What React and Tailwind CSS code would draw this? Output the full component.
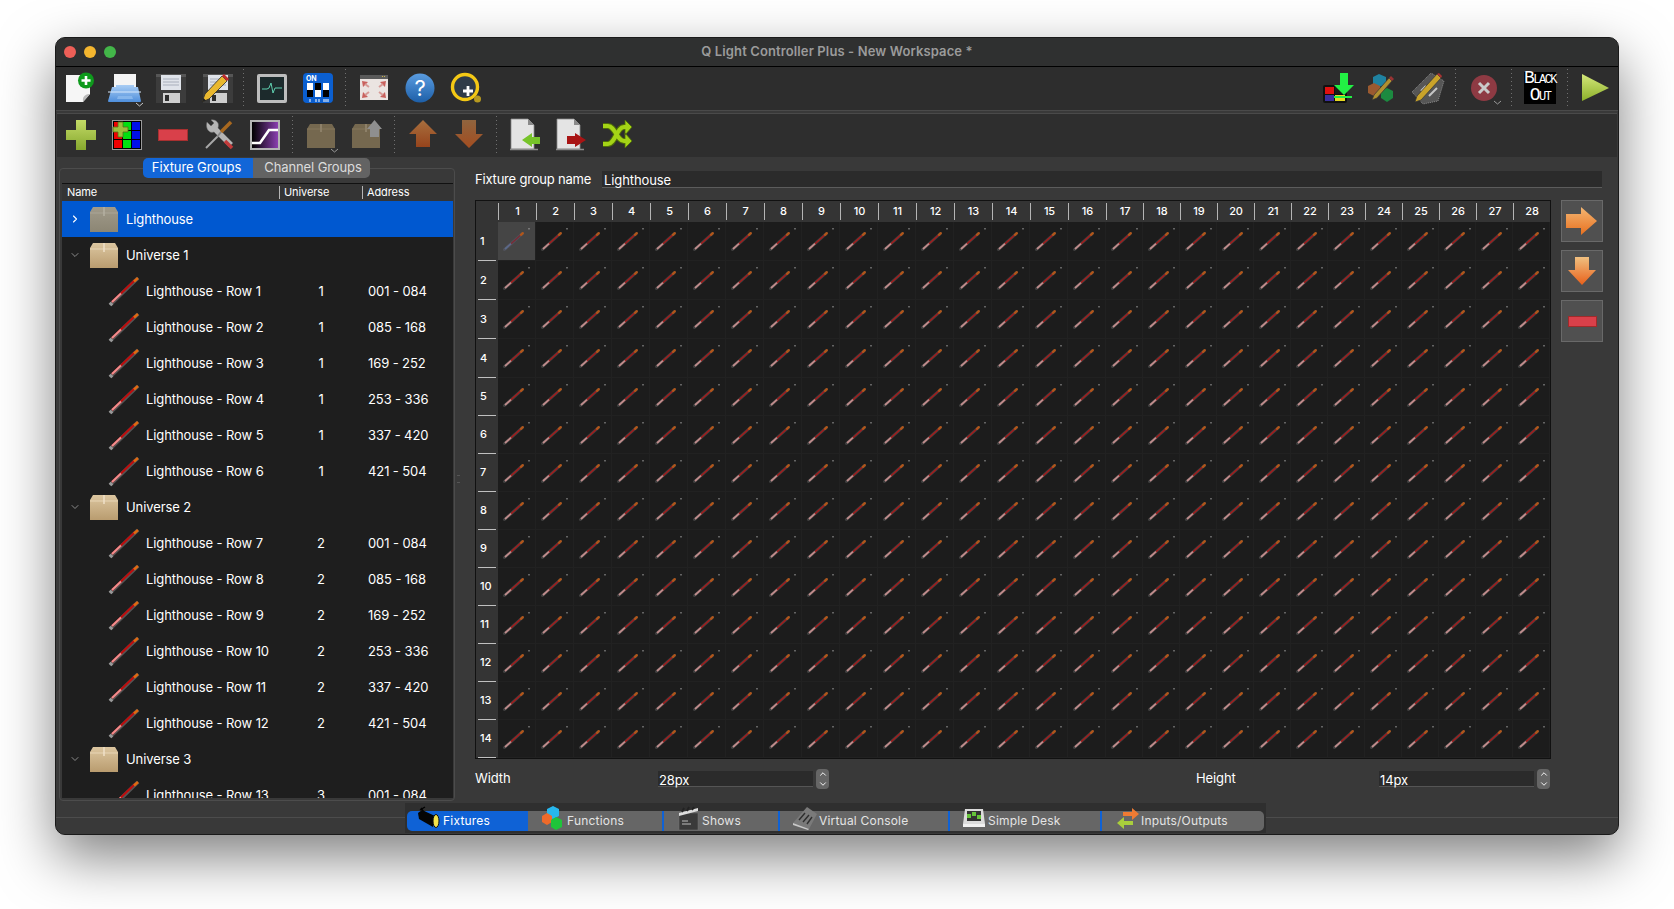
import { ChevronDown, ChevronRight, ChevronUp } from "lucide-react";

const columns = Array.from({ length: 28 }, (_, i) => i + 1);
const rows = Array.from({ length: 14 }, (_, i) => i + 1);

const treeItems = [
  { type: "group", name: "Lighthouse", selected: true },
  { type: "group", name: "Universe 1" },
  { name: "Lighthouse - Row 1", universe: 1, address: "001 - 084" },
  { name: "Lighthouse - Row 2", universe: 1, address: "085 - 168" },
  { name: "Lighthouse - Row 3", universe: 1, address: "169 - 252" },
  { name: "Lighthouse - Row 4", universe: 1, address: "253 - 336" },
  { name: "Lighthouse - Row 5", universe: 1, address: "337 - 420" },
  { name: "Lighthouse - Row 6", universe: 1, address: "421 - 504" },
  { type: "group", name: "Universe 2" },
  { name: "Lighthouse - Row 7", universe: 2, address: "001 - 084" },
  { name: "Lighthouse - Row 8", universe: 2, address: "085 - 168" },
  { name: "Lighthouse - Row 9", universe: 2, address: "169 - 252" },
  { name: "Lighthouse - Row 10", universe: 2, address: "253 - 336" },
  { name: "Lighthouse - Row 11", universe: 2, address: "337 - 420" },
  { name: "Lighthouse - Row 12", universe: 2, address: "421 - 504" },
  { type: "group", name: "Universe 3" },
  { name: "Lighthouse - Row 13", universe: 3, address: "001 - 084" },
];

// Toolbar icons, all on a 32px box
const Svg = ({ children, size = 32 }) => (
  <svg width={size} height={size} viewBox="0 0 32 32" className="shrink-0 overflow-visible">
    {children}
  </svg>
);

const NewIcon = () => (
  <Svg>
    <path d="M3 3h24v19l-7 8H3z" fill="#f6f6f6" />
    <path d="M27 22c-3 0-8 1-7 8z" fill="#b9b9b9" />
    <circle cx="23" cy="8.500" r="8" fill="#0e9a1c" />
    <path d="M23 4v9M18.500 8.500h9" stroke="#fff" strokeWidth="2.600" />
  </Svg>
);

const PrintIcon = () => (
  <Svg>
    <defs>
      <linearGradient id="printBody" x1="0" y1="0" x2="0" y2="1">
        <stop offset="0" stopColor="#a9cdf4" />
        <stop offset="1" stopColor="#4f8fdc" />
      </linearGradient>
    </defs>
    <path d="M5 2h22v16H5z" fill="#f4f4f4" />
    <path d="M3 15h4v-2h18v2h4l3 14a1 1 0 0 1-1 1H0a1 1 0 0 1-1-1z" fill="url(#printBody)" />
    <path d="M-1 20h33" stroke="#d6e8fb" strokeWidth="1" />
    <path d="M9 24h14l1 3H8z" fill="#86b6ec" />
    <path d="M27 31l3.500 3 3.500-3" fill="none" stroke="#c8c8c8" strokeWidth="1" />
  </Svg>
);

const Floppy = ({ x = 0 }) => (
  <g transform={`translate(${x} 0)`}>
    <path d="M0 2h30v29H0z" fill="#3c3c3c" />
    <path d="M0 2h30v3H0z" fill="#565656" />
    <path d="M5 3h20v15H5z" fill="#dfe3ea" />
    <path d="M7 7h16M7 10h16M7 13h16" stroke="#a8aebb" strokeWidth="1" />
    <path d="M7 21h17v10H7z" fill="#cfcfcf" />
    <path d="M9 23h4v6H9z" fill="#2c2c2c" />
  </g>
);

const SaveIcon = () => (
  <Svg>
    <Floppy x="1" />
  </Svg>
);

const Pencil = () => (
  <g>
    <path d="M1 30l3-8L21 4l5 5L8 27z" fill="#e9b82f" stroke="#2b2b2b" strokeWidth="0.800" />
    <path d="M21 4l2-2 5 5-2 2z" fill="#c22c2c" />
    <path d="M1 30l1.500-4 2.500 2.500z" fill="#222" />
  </g>
);

const SaveAsIcon = () => (
  <Svg>
    <Floppy x="2" />
    <Pencil />
  </Svg>
);

const MonitorIcon = () => (
  <Svg>
    <rect x="1" y="2" width="30" height="29" rx="2" fill="#bdbdbd" />
    <rect x="4" y="5" width="24" height="23" fill="#1c2a2c" />
    <path d="M6 17h5l2-1 2-5 2 10 2-5h7" fill="none" stroke="#5fd0b0" strokeWidth="1" />
  </Svg>
);

const DipIcon = () => (
  <Svg>
    <rect x="1" y="1" width="30" height="30" rx="4" fill="#0b5fd0" />
    <text x="4" y="9" fontSize="7" fontWeight="700" fill="#fff" fontFamily="Inter, sans-serif">ON</text>
    <path d="M5 11h6v14H5zM13 11h6v14h-6zM21 11h6v14h-6z" fill="#fff" />
    <path d="M5 18h6v7H5zM13 11h6v7h-6zM21 18h6v7h-6z" fill="#000" />
    <path d="M8 27v3M14 27v3M17 27v3M22 27v3M24 27v3M26 27v3" stroke="#fff" strokeWidth="1" />
  </Svg>
);

const FullscreenIcon = () => (
  <Svg>
    <rect x="2" y="3" width="28" height="25" fill="#ebe4e1" />
    <rect x="2" y="3" width="28" height="4" fill="#5a5a5a" />
    <path d="M24 4.500h4" stroke="#c9b24a" strokeWidth="1" strokeDasharray="1 1" />
    <path d="M4 9l6 1-5 5zM28 9l-6 1 5 5zM4 26l6-1-5-5zM28 26l-6-1 5-5z" fill="#c9605c" />
    <path d="M7 12l4 3M25 12l-4 3M7 23l4-3M25 23l-4-3" stroke="#d79a96" strokeWidth="2" />
  </Svg>
);

const HelpIcon = () => (
  <Svg>
    <defs>
      <linearGradient id="helpFill" x1="0" y1="0" x2="0" y2="1">
        <stop offset="0" stopColor="#5a9ce0" />
        <stop offset="1" stopColor="#1d5fa8" />
      </linearGradient>
    </defs>
    <circle cx="16" cy="16" r="14.500" fill="url(#helpFill)" />
    <text x="16" y="24" textAnchor="middle" fontSize="22" fill="#fff" fontFamily="Inter, sans-serif">?</text>
  </Svg>
);

const QlcIcon = () => (
  <Svg>
    <circle cx="15" cy="15" r="12.500" fill="#2f3b48" stroke="#f3c815" strokeWidth="3.400" />
    <path d="M18 14v10M13 19h10" stroke="#fff" strokeWidth="2.800" />
    <circle cx="27.500" cy="27" r="3.500" fill="#b79a20" />
  </Svg>
);

const FixtureLoadIcon = () => (
  <Svg>
    <rect x="1" y="13" width="24" height="18" rx="2" fill="#111" />
    <path d="M3 15h9v7H3z" fill="#e01010" />
    <path d="M13 15h10v7H13z" fill="#1a1a1a" />
    <path d="M3 23h9v6H3z" fill="#3a2f9e" />
    <path d="M13 23h10v6H13z" fill="#e6d820" />
    <path d="M18 1h8v12h6L22 23 12 13h6z" fill="#22f044" />
    <path d="M12 25h18" stroke="#22f044" strokeWidth="2" />
  </Svg>
);

const PaletteEditIcon = () => (
  <Svg>
    <path d="M12 2l7 3v7l-7 3-6-3V5z" fill="#1f82a0" />
    <path d="M7 11l6 3v7l-6 3-6-3v-7z" fill="#9a5a30" />
    <path d="M20 16l6 3v7l-6 4-6-4v-7z" fill="#1c8a40" />
    <path d="M5 28l2-5L22 6l3 3L10 26z" fill="#b09030" stroke="#333" strokeWidth="0.700" />
    <path d="M22 6l2-2 3 3-2 2z" fill="#933" />
  </Svg>
);

const DeskEditIcon = () => (
  <Svg>
    <path d="M0 20L19 1l13 8-6 20-15 3z" fill="#565656" stroke="#bbb" strokeWidth="0.600" strokeDasharray="1 1" />
    <path d="M9 19l5-5M17 24l8-8" stroke="#c6c6c6" strokeWidth="2" />
    <path d="M3 30l2-6L25 2l4 4L9 28z" fill="#c9a32a" stroke="#333" strokeWidth="0.700" />
    <path d="M25 2l2-1 3 3-1 2z" fill="#a33" />
  </Svg>
);

const StopIcon = () => (
  <Svg>
    <circle cx="16" cy="16" r="13" fill="#8e3a43" />
    <path d="M11 11l10 10M21 11L11 21" stroke="#c9c9c9" strokeWidth="3" />
    <path d="M26 29l3.500 3 3.500-3" fill="none" stroke="#9a9a9a" strokeWidth="1" />
  </Svg>
);

const PlayIcon = () => (
  <Svg>
    <defs>
      <linearGradient id="playFill" x1="0" y1="0" x2="0" y2="1">
        <stop offset="0" stopColor="#d4e77a" />
        <stop offset="1" stopColor="#8cb02a" />
      </linearGradient>
    </defs>
    <path d="M2 2l27 14L2 29z" fill="url(#playFill)" />
  </Svg>
);

const PlusIcon = () => (
  <Svg>
    <defs>
      <linearGradient id="plusFill" x1="0" y1="0" x2="0" y2="1">
        <stop offset="0" stopColor="#c3da67" />
        <stop offset="1" stopColor="#86a82e" />
      </linearGradient>
    </defs>
    <path d="M11 1h10v10h10v10H21v10H11V21H1V11h10z" fill="url(#plusFill)" />
  </Svg>
);

const RgbAddIcon = () => (
  <Svg>
    <rect x="1" y="1" width="30" height="30" fill="#9a9a9a" />
    <rect x="2" y="2" width="28" height="28" fill="#000" />
    <path d="M3 3h8v8H3zM3 12h8v8H3zM3 21h8v8H3z" fill="#f00000" />
    <path d="M12 3h8v8h-8zM12 12h8v8h-8zM12 21h8v8h-8z" fill="#00e010" />
    <path d="M21 3h8v8h-8zM21 12h8v8h-8zM21 21h8v8h-8z" fill="#0010e8" />
    <path d="M7 3h5v5h5v5h-5v5H7v-5H2V8h5z" fill="#9cbf3c" stroke="#55701a" strokeWidth="0.800" />
  </Svg>
);

const MinusIcon = () => (
  <Svg>
    <rect x="1" y="10" width="30" height="12" fill="#a83030" />
    <rect x="2" y="11" width="28" height="10" fill="#d9404a" />
  </Svg>
);

const ToolsIcon = () => (
  <Svg>
    <path d="M3 29L20 12" stroke="#a8a8a8" strokeWidth="2" />
    <path d="M4 3l4 4 3-3-3-3c5-1 9 3 7 8l15 15-4 4L11 13C6 15 2 9 4 3z" fill="#b4b4b4" stroke="#666" strokeWidth="0.500" />
    <path d="M18 13L28 3" stroke="#a8681f" strokeWidth="3.600" />
    <path d="M14 18l4-5" stroke="#888" strokeWidth="2" />
    <path d="M22 22l7 7" stroke="#c23a3a" strokeWidth="3.600" />
  </Svg>
);

const CurveIcon = () => (
  <Svg>
    <defs>
      <linearGradient id="curveFill" x1="0" y1="0" x2="1" y2="0">
        <stop offset="0" stopColor="#000" />
        <stop offset="1" stopColor="#8a3fb0" />
      </linearGradient>
    </defs>
    <rect x="1" y="1" width="30" height="30" fill="#b4b4b4" />
    <rect x="3" y="3" width="26" height="26" fill="url(#curveFill)" />
    <path d="M3 24h8l9-13h9" fill="none" stroke="#fff" strokeWidth="2.600" />
  </Svg>
);

const Box = () => (
  <>
    <path d="M4 5h22l3 5v19H1V10z" fill="#75684f" />
    <path d="M1 10h28" stroke="#85775d" strokeWidth="1" />
    <path d="M15 5v8" stroke="#8d8068" strokeWidth="2" />
  </>
);

const BoxIcon = () => (
  <Svg>
    <g transform="translate(1 0)">
      <Box />
    </g>
    <path d="M26 30l3.500 3 3.500-3" fill="none" stroke="#9a9a9a" strokeWidth="1" />
  </Svg>
);

const BoxUpIcon = () => (
  <Svg>
    <Box />
    <path d="M19 18h9v-8h3L23.500 1 16 10h3z" fill="#8f8f8f" />
  </Svg>
);

const ArrowUpBrown = () => (
  <Svg>
    <defs>
      <linearGradient id="brownUp" x1="0" y1="0" x2="0" y2="1">
        <stop offset="0" stopColor="#a86f3e" />
        <stop offset="1" stopColor="#96441c" />
      </linearGradient>
    </defs>
    <path d="M16 1l14 14h-7v13H9V15H2z" fill="url(#brownUp)" />
  </Svg>
);

const ArrowDownBrown = () => (
  <Svg>
    <defs>
      <linearGradient id="brownDown" x1="0" y1="0" x2="0" y2="1">
        <stop offset="0" stopColor="#90643e" />
        <stop offset="1" stopColor="#a34d20" />
      </linearGradient>
    </defs>
    <path d="M9 1h14v14h7L16 29 2 15h7z" fill="url(#brownDown)" />
  </Svg>
);

const Doc = () => (
  <>
    <path d="M2 0h17l6 6v24H2z" fill="#e4e4e4" stroke="#8a8a8a" strokeWidth="0.800" />
    <path d="M19 0v6h6z" fill="#8a8a8a" />
    <path d="M1 30.500h28" stroke="#8c8c8c" strokeWidth="1.400" />
  </>
);

const ImportIcon = () => (
  <Svg>
    <Doc />
    <path d="M13 21l10-7v4h8v7h-8v3z" fill="#77c42a" />
  </Svg>
);

const ExportIcon = () => (
  <Svg>
    <Doc />
    <path d="M12 17h8v-3l11 7-11 7v-3h-8z" fill="#a81414" />
  </Svg>
);

const ShuffleIcon = () => (
  <Svg>
    <path d="M2 7h5c7 0 9 15 16 15h3M2 25h5c7 0 9-17 16-17h3" fill="none" stroke="#4e6c08" strokeWidth="6" />
    <path d="M24 14l7 8-7 7zM24 1l7 7-7 8z" fill="#a4d416" stroke="#4e6c08" strokeWidth="0.800" />
    <path d="M2 7h5c7 0 9 15 16 15h3M2 25h5c7 0 9-17 16-17h3" fill="none" stroke="#a4d416" strokeWidth="4" />
  </Svg>
);

const BlackOutIcon = () => (
  <div className="w-[32px] h-[32px] bg-black text-white flex flex-col items-center justify-center shrink-0 font-['Liberation_Mono',monospace] leading-[15px] text-[12px] tracking-[-1.5px]">
    <span className="whitespace-nowrap">
      <span className="text-[18px]">B</span>LACK
    </span>
    <span className="whitespace-nowrap">
      <span className="text-[18px]">O</span>UT
    </span>
  </div>
);

// The little fixture bar used in the tree
const FixtureBar = ({ size = 32 }) => (
  <svg width={size} height={size} viewBox="0 0 32 32" className="shrink-0">
    <line x1="2" y1="30" x2="30" y2="3" stroke="#555" strokeWidth="3.800" />
    <line x1="4" y1="27" x2="27" y2="5" stroke="#c00c0c" strokeWidth="2" />
    <line x1="4" y1="27" x2="13" y2="18.500" stroke="#ef8f8f" strokeWidth="2" />
    <line x1="26" y1="6.500" x2="30" y2="3" stroke="#e06a10" strokeWidth="2.400" />
    <line x1="2" y1="30" x2="4" y2="28" stroke="#999" strokeWidth="3.800" />
  </svg>
);

// Grid cell icon: same bar plus the small tick in the top right corner
const CellIcon = ({ active }) => (
  <svg width="37" height="38" viewBox="0 0 37 38" className="block">
    <line x1="31" y1="6" x2="31" y2="7.500" stroke="#aaa" strokeWidth="1" />
    <line x1="6.500" y1="27.500" x2="24.500" y2="11.500" stroke={active ? "#50525c" : "#404040"} strokeWidth="3" strokeLinecap="round" />
    <line x1="10" y1="24.400" x2="23" y2="12.800" stroke={active ? "#7a2a34" : "#a81a1a"} strokeWidth="1.400" />
    <line x1="7" y1="27" x2="13" y2="21.700" stroke={active ? "#5b6a8a" : "#c08e8e"} strokeWidth="1.800" />
    <line x1="23" y1="12.800" x2="24.800" y2="11.200" stroke="#b0561a" strokeWidth="2.400" strokeLinecap="round" />
  </svg>
);

const Separator = ({ className }) => (
  <div
    className={`h-[38px] w-px shrink-0 bg-[repeating-linear-gradient(to_bottom,#707070_0,#707070_1px,transparent_1px,transparent_4px)] ${className}`}
  />
);

const BoxIconTree = ({ dim }) => (
  <svg width="28" height="25" viewBox="0 0 28 25" className="shrink-0">
    <defs>
      <linearGradient id={dim ? "boxDim" : "boxLight"} x1="0" y1="0" x2="0" y2="1">
        <stop offset="0" stopColor={dim ? "#a09a8a" : "#dcc6a0"} />
        <stop offset="1" stopColor={dim ? "#8c8674" : "#b99c6f"} />
      </linearGradient>
    </defs>
    <path d="M3 0h22l3 5v20H0V5z" fill={`url(#${dim ? "boxDim" : "boxLight"})`} />
    <path d="M0 6h28" stroke={dim ? "#aaa596" : "#e8d6b6"} strokeWidth="1" />
    <path d="M14 0v9" stroke={dim ? "#b5b0a2" : "#efe1c8"} strokeWidth="1.500" />
  </svg>
);

const TreeRow = ({ item }) => {
  if (item.type === "group") {
    return (
      <div className={`h-[36px] flex items-center shrink-0 ${item.selected ? "bg-[#0058d0]" : ""}`}>
        <div className="w-[28px] flex justify-center pr-[3px] shrink-0">
          {item.selected ? (
            <ChevronRight size={12} strokeWidth={2.200} className="text-white" />
          ) : (
            <ChevronDown size={12} strokeWidth={2} className="text-[#8a8a8a]" />
          )}
        </div>
        <BoxIconTree dim={item.selected} />
        <span className="ml-[8px] mt-[2px] text-[13px] text-white">{item.name}</span>
      </div>
    );
  }
  return (
    <div className="h-[36px] flex items-center shrink-0 text-[13px] text-white">
      <div className="w-[218px] flex items-center pl-[46px] shrink-0">
        <FixtureBar />
        <span className="ml-[6px] mt-[2px] whitespace-nowrap">{item.name}</span>
      </div>
      <div className="w-[82px] mt-[2px] text-center shrink-0">{item.universe}</div>
      <div className="pl-[6px] mt-[2px] whitespace-nowrap">{item.address}</div>
    </div>
  );
};

const HeaderTick = ({ className }) => <div className={`w-px bg-[#b5b5b5] shrink-0 ${className}`} />;

const FixtureTree = () => (
  <div className="w-[391px] h-[615px] bg-[#1e1e1e] overflow-hidden flex flex-col">
    <div className="h-[18px] bg-[#343434] border-t border-[#111] flex items-center text-[11px] text-white shrink-0">
      <div className="w-[217px] pl-[5px]">Name</div>
      <HeaderTick className="h-[13px]" />
      <div className="w-[82px] pl-[4px]">Universe</div>
      <HeaderTick className="h-[13px]" />
      <div className="flex-1 pl-[4px]">Address</div>
    </div>
    {treeItems.map((item) => (
      <TreeRow key={item.name} item={item} />
    ))}
  </div>
);

const FixtureGrid = () => (
  <div className="grid grid-cols-[22px_repeat(16,38px)_repeat(12,37px)] grid-rows-[21px_repeat(4,39px)_repeat(10,38px)] border border-[#111] bg-[#1c1c1c] shrink-0 text-[11px] font-medium text-white">
    <div className="bg-[#343434]" />
    {columns.map((col) => (
      <div key={col} className="bg-[#343434] flex items-center">
        <HeaderTick className="h-[17px]" />
        <span className="flex-1 text-center">{col}</span>
      </div>
    ))}
    {rows.map((row) => (
      <div key={row} className="contents">
        <div className="bg-[#343434] flex flex-col">
          <span className="flex-1 flex items-center pl-[4px]">{row}</span>
          <div className="h-px mx-[2px] bg-[#c0c0c0]" />
        </div>
        {columns.map((col) => {
          const active = row === 1 && col === 1;
          return (
            <div
              key={col}
              className={`border-r border-b border-[#212121] overflow-hidden ${active ? "bg-[#454545]" : ""}`}
            >
              <CellIcon active={active} />
            </div>
          );
        })}
      </div>
    ))}
  </div>
);

const SpinBox = ({ value, label, labelClass }) => (
  <div className={`flex items-center ${labelClass}`}>
    <span className="w-[183px] text-[13px] text-white">{label}</span>
    <div className="w-[155px] h-[16px] pl-[1px] bg-[#2b2b2b] border-b border-[#555] text-[13px] leading-[18px] text-white">
      {value}
    </div>
    <div className="ml-[3px] w-[13px] h-[20px] rounded-[4px] bg-[#666] flex flex-col items-center justify-center text-white">
      <ChevronUp size={10} strokeWidth={2.200} />
      <ChevronDown size={10} strokeWidth={2.200} />
    </div>
  </div>
);

const SideButton = ({ children }) => (
  <div className="w-[42px] h-[42px] bg-[#505050] border border-[#696969] flex items-center justify-center">
    {children}
  </div>
);

// Bottom tab icons
const SpotIcon = () => (
  <svg width="24" height="24" viewBox="0 0 24 24" className="shrink-0">
    <path d="M3 4l5-3M4 2l4 6" stroke="#000" strokeWidth="1.400" fill="none" />
    <path d="M1 7l4-3 13 6-2 11L2 13z" fill="#050505" />
    <ellipse cx="19" cy="15" rx="3" ry="6.500" fill="#f3e24a" stroke="#111" strokeWidth="1" />
  </svg>
);

const HexIcon = () => (
  <svg width="24" height="24" viewBox="0 0 24 24" className="shrink-0">
    <path d="M12 0l6 3v7l-6 3-6-3V3z" fill="#27b7ee" />
    <path d="M6 7l5 3v6l-5 3-5-3v-6z" fill="#ee6a2a" />
    <path d="M15 11l6 3v7l-6 3-5-3v-7z" fill="#1fc43a" />
  </svg>
);

const ClapperIcon = () => (
  <svg width="22" height="24" viewBox="0 0 22 24" className="shrink-0">
    <path d="M1 7h19v17H1z" fill="#3a3a3a" stroke="#777" strokeWidth="0.500" />
    <path d="M1 7L20 2v3L1 10z" fill="#ddd" />
    <path d="M4 6l2-4M9 5l2-4M14 4l2-3" stroke="#222" strokeWidth="1.800" />
    <path d="M4 15h6M4 18h9" stroke="#bbb" strokeWidth="1.200" />
  </svg>
);

const MixerIcon = () => (
  <svg width="24" height="24" viewBox="0 0 24 24" className="shrink-0">
    <path d="M0 17L14 1l10 7-8 15z" fill="#7a7a7a" />
    <path d="M0 17l16 6-1 1L0 19z" fill="#c8c8c8" />
    <path d="M6 14l6-7M10 16l6-7M14 18l5-7" stroke="#2e2e2e" strokeWidth="1.400" />
  </svg>
);

const DeskIcon = () => (
  <svg width="24" height="24" viewBox="0 0 24 24" className="shrink-0">
    <path d="M3 3h18l2 15H1z" fill="#dcdcdc" />
    <path d="M5 5h14v10H5z" fill="#333" />
    <path d="M5 8h4v4H5zM10 6h4v4h-4zM15 9h4v4h-4z" fill="#66c43a" />
    <path d="M1 18h22v3H1z" fill="#f1f1f1" />
  </svg>
);

const IoIcon = () => (
  <svg width="24" height="24" viewBox="0 0 24 24" className="shrink-0">
    <path d="M8 6h9V2l7 6-7 6v-4H8z" fill="#ef7b33" />
    <path d="M18 15H9v-4l-7 6 7 6v-4h9z" fill="#a9ce3c" />
  </svg>
);

const bottomTabs = [
  { name: "Fixtures", Icon: SpotIcon, width: "w-[121px]", pad: "pl-[10px]", active: true },
  { name: "Functions", Icon: HexIcon, width: "w-[134px]", pad: "pl-[13px]" },
  { name: "Shows", Icon: ClapperIcon, width: "w-[116px]", pad: "pl-[14px]" },
  { name: "Virtual Console", Icon: MixerIcon, width: "w-[170px]", pad: "pl-[13px]" },
  { name: "Simple Desk", Icon: DeskIcon, width: "w-[152px]", pad: "pl-[12px]" },
  { name: "Inputs/Outputs", Icon: IoIcon, width: "w-[164px]", pad: "pl-[13px]" },
];

const BottomTabs = () => (
  <div className="absolute left-[349px] bottom-[1px] w-[861px] h-[30px] bg-[#2f2f2f] flex items-end pl-[2px] pb-[2px]">
    {bottomTabs.map(({ name, Icon, width, pad, active }, index) => (
      <div
        key={name}
        className={`h-[20px] flex items-center gap-[2px] text-[12px] tracking-[0.2px] ${width} ${pad} ${
          active ? "bg-[#0f62d6] rounded-l-[5px] text-white" : "bg-[#666] text-[#e4e4e4]"
        } ${index === bottomTabs.length - 1 ? "rounded-r-[5px]" : ""} ${
          index > 1 ? "border-l-2 border-[#0f62d6]" : ""
        }`}
      >
        <div className="-mt-[6px] shrink-0">
          <Icon />
        </div>
        <span className="whitespace-nowrap">{name}</span>
      </div>
    ))}
  </div>
);

export default function App() {
  return (
    <div className="w-[1674px] h-[909px] bg-white pt-[37px] pl-[55px] overflow-hidden font-['Inter',sans-serif] tracking-[-0.1px]">
      <div className="relative w-[1564px] h-[798px] rounded-[10px] border border-[#1a1a1a] bg-[#393939] shadow-[0_22px_55px_rgba(0,0,0,0.5)] overflow-hidden flex flex-col">
        {/* Title bar */}
        <div className="h-[29px] shrink-0 bg-[#2f3030] border-b border-black flex items-center px-[8px] relative">
          <div className="flex gap-[8px]">
            <div className="w-[12px] h-[12px] rounded-full bg-[#ed5f57]" />
            <div className="w-[12px] h-[12px] rounded-full bg-[#f4b62f]" />
            <div className="w-[12px] h-[12px] rounded-full bg-[#43b649]" />
          </div>
          <div className="flex-1 text-center text-[13px] font-semibold tracking-[0.12px] text-[#9b9b9b] pr-[52px]">
            Q Light Controller Plus - New Workspace *
          </div>
        </div>

        {/* Main toolbar */}
        <div className="h-[44px] shrink-0 bg-[#2d2d2d] border-b border-[#4a4a4a] flex items-start pt-[5px] pl-[7px] pr-[6px]">
          <div className="flex gap-[14px]">
            <NewIcon />
            <PrintIcon />
            <SaveIcon />
            <SaveAsIcon />
          </div>
          <Separator className="ml-[10px] mr-[12px] -mt-[3px]" />
          <div className="flex gap-[14px]">
            <MonitorIcon />
            <DipIcon />
          </div>
          <Separator className="ml-[11px] mr-[12px] -mt-[3px]" />
          <div className="flex gap-[14px]">
            <FullscreenIcon />
            <HelpIcon />
            <QlcIcon />
          </div>
          <div className="flex-1" />
          <div className="flex gap-[13px]">
            <FixtureLoadIcon />
            <PaletteEditIcon />
            <DeskEditIcon />
          </div>
          <Separator className="ml-[11px] mr-[12px] -mt-[3px]" />
          <StopIcon />
          <Separator className="ml-[11px] mr-[12px] -mt-[3px]" />
          <BlackOutIcon />
          <Separator className="ml-[11px] mr-[12px] -mt-[3px]" />
          <PlayIcon />
        </div>

        {/* Fixture manager toolbar */}
        <div className="h-[44px] mt-[2px] mx-[1px] shrink-0 bg-[#2e2e2e] border-t border-[#4a4a4a] flex items-start pt-[5px] pl-[8px]">
          <div className="flex gap-[14px]">
            <PlusIcon />
            <RgbAddIcon />
            <MinusIcon />
            <ToolsIcon />
            <CurveIcon />
          </div>
          <Separator className="ml-[11px] mr-[12px] -mt-[3px]" />
          <div className="flex gap-[14px]">
            <BoxIcon />
            <BoxUpIcon />
          </div>
          <Separator className="ml-[11px] mr-[12px] -mt-[3px]" />
          <div className="flex gap-[14px]">
            <ArrowUpBrown />
            <ArrowDownBrown />
          </div>
          <Separator className="ml-[11px] mr-[12px] -mt-[3px]" />
          <div className="flex gap-[14px]">
            <ImportIcon />
            <ExportIcon />
            <ShuffleIcon />
          </div>
        </div>

        {/* Content */}
        <div className="relative h-[660px] shrink-0 flex">
          <div className="absolute left-[87px] top-[1px] flex h-[20px] text-[13px] z-10">
            <div className="w-[110px] pr-[3px] bg-[#1266d8] rounded-l-[5px] text-white flex items-center justify-center">
              Fixture Groups
            </div>
            <div className="w-[117px] pl-[3px] bg-[#636363] rounded-r-[5px] text-[#dcdcdc] flex items-center justify-center">
              Channel Groups
            </div>
          </div>

          <div className="ml-[3px] mt-[11px] w-[396px] h-[633px] rounded-[4px] border border-[#4c4c4c] pt-[14px] px-[2px] shrink-0">
            <FixtureTree />
          </div>

          <div className="w-[3px] h-[8px] ml-[2px] mt-[318px] border-y border-[#555] shrink-0" />

          <div className="ml-[15px] w-[1128px] pt-[14px] shrink-0 flex flex-col">
            <div className="flex items-center h-[17px] text-[13px] text-white">
              <span className="w-[127px] shrink-0 tracking-[-0.2px]">Fixture group name</span>
              <div className="w-[1000px] h-[17px] bg-[#2b2b2b] border-b border-[#5c5c5c] pl-[2px] leading-[19px]">
                Lighthouse
              </div>
            </div>

            <div className="flex mt-[12px]">
              <FixtureGrid />
              <div className="ml-[10px] flex flex-col gap-[8px]">
                <SideButton>
                  <svg width="32" height="28" viewBox="0 0 32 28">
                    <defs>
                      <linearGradient id="sideRight" x1="0" y1="0" x2="0" y2="1">
                        <stop offset="0" stopColor="#f3b673" />
                        <stop offset="1" stopColor="#e8701f" />
                      </linearGradient>
                    </defs>
                    <path d="M0 7h15V0l16 14-16 14v-7H0z" fill="url(#sideRight)" />
                  </svg>
                </SideButton>
                <SideButton>
                  <svg width="28" height="28" viewBox="0 0 28 28">
                    <defs>
                      <linearGradient id="sideDown" x1="0" y1="0" x2="0" y2="1">
                        <stop offset="0" stopColor="#f0c080" />
                        <stop offset="1" stopColor="#e8601a" />
                      </linearGradient>
                    </defs>
                    <path d="M7 0h14v13h7L14 28 0 13h7z" fill="url(#sideDown)" />
                  </svg>
                </SideButton>
                <SideButton>
                  <div className="w-[29px] h-[11px] bg-[#d9404a] border border-[#a02a2a]" />
                </SideButton>
              </div>
            </div>

            <div className="flex mt-[10px] h-[20px]">
              <SpinBox label="Width" value="28px" />
              <SpinBox label="Height" value="14px" labelClass="ml-[367px]" />
            </div>
          </div>
        </div>

        {/* Status bar */}
        <div className="flex-1 border-t border-[#4c4c4c] bg-[#393939]" />

        <BottomTabs />
      </div>
    </div>
  );
}
